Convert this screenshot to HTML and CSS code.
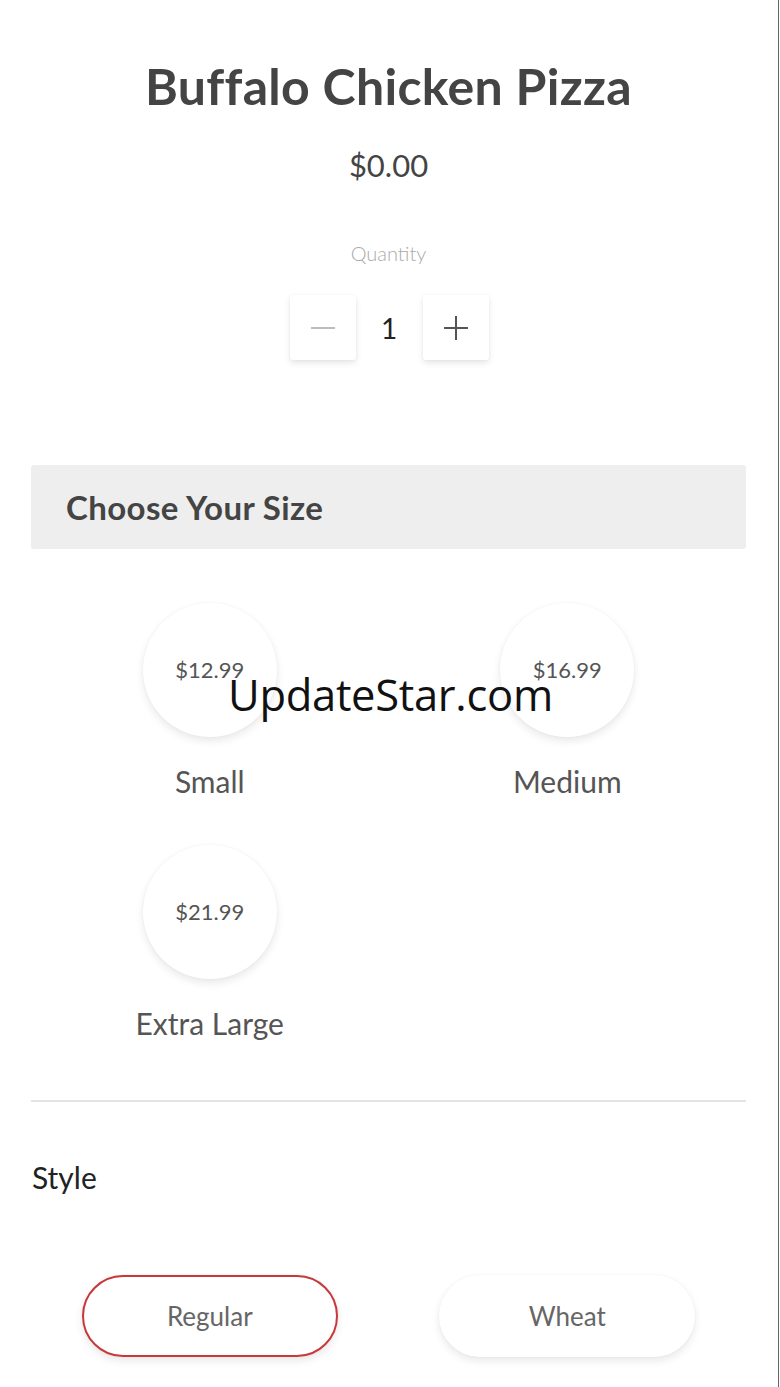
FILE: index.html
```html
<!DOCTYPE html>
<html>
<head>
<meta charset="utf-8">
<link rel="stylesheet" href="styles.css">
</head>
<body>
<div class="page">
  <h1 class="title">Buffalo Chicken Pizza</h1>
  <div class="price">$0.00</div>
  <div class="qty-label">Quantity</div>
  <div class="stepper">
    <div class="step-btn">
      <svg width="26" height="26" viewBox="0 0 26 26"><path d="M1 13H25" stroke="#bdbdbd" stroke-width="2"/></svg>
    </div>
    <div class="qty-val">1</div>
    <div class="step-btn">
      <svg width="26" height="26" viewBox="0 0 26 26"><path d="M1 13H25M13 1V25" stroke="#555" stroke-width="2"/></svg>
    </div>
  </div>

  <div class="section-head">Choose Your Size</div>

  <div class="sizes">
    <div class="size">
      <div class="circle">$12.99</div>
      <div class="size-name">Small</div>
    </div>
    <div class="size">
      <div class="circle">$16.99</div>
      <div class="size-name">Medium</div>
    </div>
    <div class="size">
      <div class="circle">$21.99</div>
      <div class="size-name">Extra Large</div>
    </div>
  </div>

  <hr class="divider">

  <div class="style-label">Style</div>

  <div class="styles">
    <div class="pill-cell"><div class="pill selected">Regular</div></div>
    <div class="pill-cell"><div class="pill">Wheat</div></div>
  </div>

  <div class="watermark">UpdateStar.com</div>
</div>
</body>
</html>
```

FILE: styles.css
```css
html, body {
  margin: 0;
  padding: 0;
  background: #fff;
}
body {
  width: 780px;
  height: 1387px;
  overflow: hidden;
}
.page {
  position: relative;
  box-sizing: border-box;
  width: 779px;
  height: 1387px;
  border-right: 1px solid #666;
  padding: 0 32px 0 31px;
  font-family: "Lato", "Open Sans", sans-serif;
  color: #444;
}
.title {
  margin: 0;
  padding-top: 56px;
  text-align: center;
  font-size: 50px;
  font-weight: 700;
  line-height: 60px;
  color: #444;
  letter-spacing: 0.3px;
}
.price {
  margin-top: 29px;
  text-align: center;
  font-size: 31px;
  line-height: 40px;
  font-weight: 400;
  color: #444;
}
.qty-label {
  margin-top: 53px;
  text-align: center;
  font-size: 20px;
  line-height: 30px;
  color: #aaa;
  font-weight: 300;
}
.stepper {
  margin-top: 27px;
  display: flex;
  justify-content: center;
  align-items: center;
  gap: 0;
  padding-left: 1px;
}
.step-btn {
  width: 66px;
  height: 65px;
  background: #fff;
  border-radius: 3px;
  box-shadow: 0 3px 6px rgba(0,0,0,0.10), 0 0 3px rgba(0,0,0,0.04);
  display: flex;
  align-items: center;
  justify-content: center;
}
.qty-val {
  width: 67px;
  text-align: center;
  font-size: 28px;
  color: #222;
  font-weight: 400;
}
.section-head {
  margin-top: 105px;
  height: 84px;
  background: #eee;
  border-radius: 3px;
  box-sizing: border-box;
  padding-left: 35px;
  display: flex;
  align-items: center;
  font-size: 33px;
  font-weight: 700;
  color: #444;
  letter-spacing: 0.4px;
}
.sizes {
  margin-top: 54px;
  display: grid;
  grid-template-columns: 1fr 1fr;
  row-gap: 44px;
}
.size {
  display: flex;
  flex-direction: column;
  align-items: center;
}
.circle {
  width: 134px;
  height: 134px;
  border-radius: 50%;
  background: #fff;
  box-shadow: 0 4px 8px rgba(0,0,0,0.09), 0 0 3px rgba(0,0,0,0.04);
  display: flex;
  align-items: center;
  justify-content: center;
  font-size: 22px;
  color: #555;
  padding-bottom: 2px;
  box-sizing: border-box;
}
.size-name {
  margin-top: 24px;
  font-size: 30px;
  line-height: 40px;
  color: #555;
}
.divider {
  margin: 57px 0 0 0;
  border: 0;
  height: 2px;
  background: #e3e3e3;
}
.style-label {
  margin-top: 55px;
  padding-left: 1px;
  font-size: 30px;
  line-height: 40px;
  color: #222;
}
.styles {
  margin-top: 78px;
  display: grid;
  grid-template-columns: 1fr 1fr;
}
.pill-cell {
  display: flex;
  justify-content: center;
}
.pill {
  box-sizing: border-box;
  width: 256px;
  height: 82px;
  border-radius: 41px;
  background: #fff;
  box-shadow: 0 4px 8px rgba(0,0,0,0.09), 0 0 3px rgba(0,0,0,0.04);
  display: flex;
  align-items: center;
  justify-content: center;
  font-size: 26px;
  color: #666;
}
.pill.selected {
  border: 2px solid #c8373a;
}
.watermark {
  position: absolute;
  left: 228px;
  top: 667px;
  font-family: "Open Sans", "Noto Sans", sans-serif;
  font-size: 43.5px;
  line-height: 56px;
  color: #111;
  letter-spacing: -0.3px;
}
```
